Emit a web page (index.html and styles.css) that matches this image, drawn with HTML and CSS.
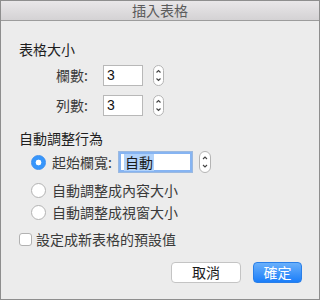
FILE: index.html
```html
<!DOCTYPE html>
<html lang="zh-Hant">
<head>
<meta charset="utf-8">
<link rel="stylesheet" href="styles.css">
</head>
<body>
<div class="window">
  <div class="titlebar">插入表格</div>
  <div class="content">
    <div class="heading h1">表格大小</div>
    <div class="row r1">
      <span class="label">欄數:</span>
      <span class="input">3</span>
      <svg class="stepper" width="11" height="21" viewBox="0 0 11 21"><rect x="0.5" y="0.5" width="10" height="20" rx="5" fill="#fff" stroke="#b4b4b4"/><path d="M3.5 7.5 L5.5 5.5 L7.5 7.5" fill="none" stroke="#444" stroke-width="1.1"/><path d="M3.5 13.5 L5.5 15.5 L7.5 13.5" fill="none" stroke="#444" stroke-width="1.1"/></svg>
    </div>
    <div class="row r2">
      <span class="label">列數:</span>
      <span class="input">3</span>
      <svg class="stepper" width="11" height="21" viewBox="0 0 11 21"><rect x="0.5" y="0.5" width="10" height="20" rx="5" fill="#fff" stroke="#b4b4b4"/><path d="M3.5 7.5 L5.5 5.5 L7.5 7.5" fill="none" stroke="#444" stroke-width="1.1"/><path d="M3.5 13.5 L5.5 15.5 L7.5 13.5" fill="none" stroke="#444" stroke-width="1.1"/></svg>
    </div>
    <div class="heading h2">自動調整行為</div>
    <div class="opt o1">
      <span class="radio on"></span>
      <span class="text">起始欄寬:</span>
      <span class="focus"><span class="sel">自動</span></span>
      <svg class="stepper s3" width="12" height="22" viewBox="0 0 12 22"><rect x="0.5" y="0.5" width="11" height="21" rx="5.5" fill="#fff" stroke="#b4b4b4"/><path d="M4 8 L6 6 L8 8" fill="none" stroke="#444" stroke-width="1.1"/><path d="M4 14 L6 16 L8 14" fill="none" stroke="#444" stroke-width="1.1"/></svg>
    </div>
    <div class="opt o2">
      <span class="radio"></span>
      <span class="text">自動調整成內容大小</span>
    </div>
    <div class="opt o3">
      <span class="radio"></span>
      <span class="text">自動調整成視窗大小</span>
    </div>
    <div class="opt o4">
      <span class="check"></span>
      <span class="text">設定成新表格的預設值</span>
    </div>
    <div class="buttons">
      <span class="btn cancel">取消</span>
      <span class="btn ok">確定</span>
    </div>
  </div>
</div>
</body>
</html>
```
FILE: styles.css
```css
* { box-sizing: border-box; }
html, body { margin: 0; padding: 0; }
body {
  width: 320px;
  height: 300px;
  font-family: "Noto Sans CJK TC", "Noto Sans", sans-serif;
  font-size: 14px;
  color: #2a2a2a;
  background: #ececec;
}
.window {
  width: 320px;
  height: 300px;
  border: 1px solid #8e8e8e;
  background: #ececec;
  display: flex;
  flex-direction: column;
}
.titlebar {
  height: 20px;
  border-bottom: 1px solid #9c9c9c;
  background: linear-gradient(#e9e7e9, #d4d2d4);
  color: #5c5c5c;
  font-size: 14px;
  line-height: 19px;
  text-align: center;
}
.content {
  padding-left: 18px;
  padding-right: 16px;
  display: flex;
  flex-direction: column;
}
.heading {
  line-height: 20px;
  color: #1e1e1e;
}
.h1 { margin-top: 18px; }
.h2 { margin-top: 12px; }
.row {
  display: flex;
  align-items: center;
  height: 21px;
}
.r1 { margin-top: 6px; }
.r2 { margin-top: 9px; }
.label {
  width: 69px;
  text-align: right;
  color: #3a3a3a;
  line-height: 21px;
}
.input {
  margin-left: 15px;
  width: 40px;
  height: 21px;
  background: #fff;
  border: 1px solid #b8b8b8;
  font-family: "Liberation Sans", sans-serif;
  font-size: 14px;
  line-height: 19px;
  padding-left: 3px;
  color: #111;
}
.stepper { margin-left: 10px; display: block; }
.opt {
  display: flex;
  align-items: center;
  height: 20px;
}
.o1 { height: 22px; margin-top: 3px; padding-left: 12px; }
.o2 { margin-top: 7px; padding-left: 12px; }
.o3 { margin-top: 2px; padding-left: 12px; }
.o4 { margin-top: 7px; }
.text { color: #3a3a3a; line-height: 20px; }
.radio {
  width: 15px;
  height: 15px;
  border-radius: 50%;
  background: #fff;
  border: 1px solid #b2b2b2;
  margin-right: 6px;
  flex: none;
}
.radio.on {
  background: radial-gradient(circle, #fff 0 2.6px, #3796fb 3.2px);
  border-color: #3a8ef0;
}
.check {
  width: 13px;
  height: 13px;
  border-radius: 3px;
  background: #fff;
  border: 1px solid #b2b2b2;
  margin-right: 4px;
  flex: none;
}
.focus {
  margin-left: 6px;
  width: 75px;
  height: 22px;
  background: #fff;
  border: 1px solid #9bb9e0;
  box-shadow: 0 0 0 2px #86b4f2 inset;
  padding: 2px 0 0 5px;
  display: flex;
  align-items: flex-start;
}
.sel {
  background: #b1d2fa;
  color: #1a1a1a;
  line-height: 17px;
  padding: 0 1px;
}
.s3 { margin-left: 6px; }
.buttons {
  display: flex;
  justify-content: flex-end;
  gap: 12px;
  margin-top: 13px;
  padding-right: 1px;
}
.btn {
  height: 21px;
  border-radius: 4px;
  line-height: 19px;
  text-align: center;
}
.cancel {
  width: 70px;
  background: #fff;
  border: 1px solid #c4c4c4;
  color: #1a1a1a;
}
.ok {
  width: 49px;
  background: linear-gradient(#6ab0fb, #1b7ef9);
  border: 1px solid #2a7fe8;
  color: #fff;
}
```
